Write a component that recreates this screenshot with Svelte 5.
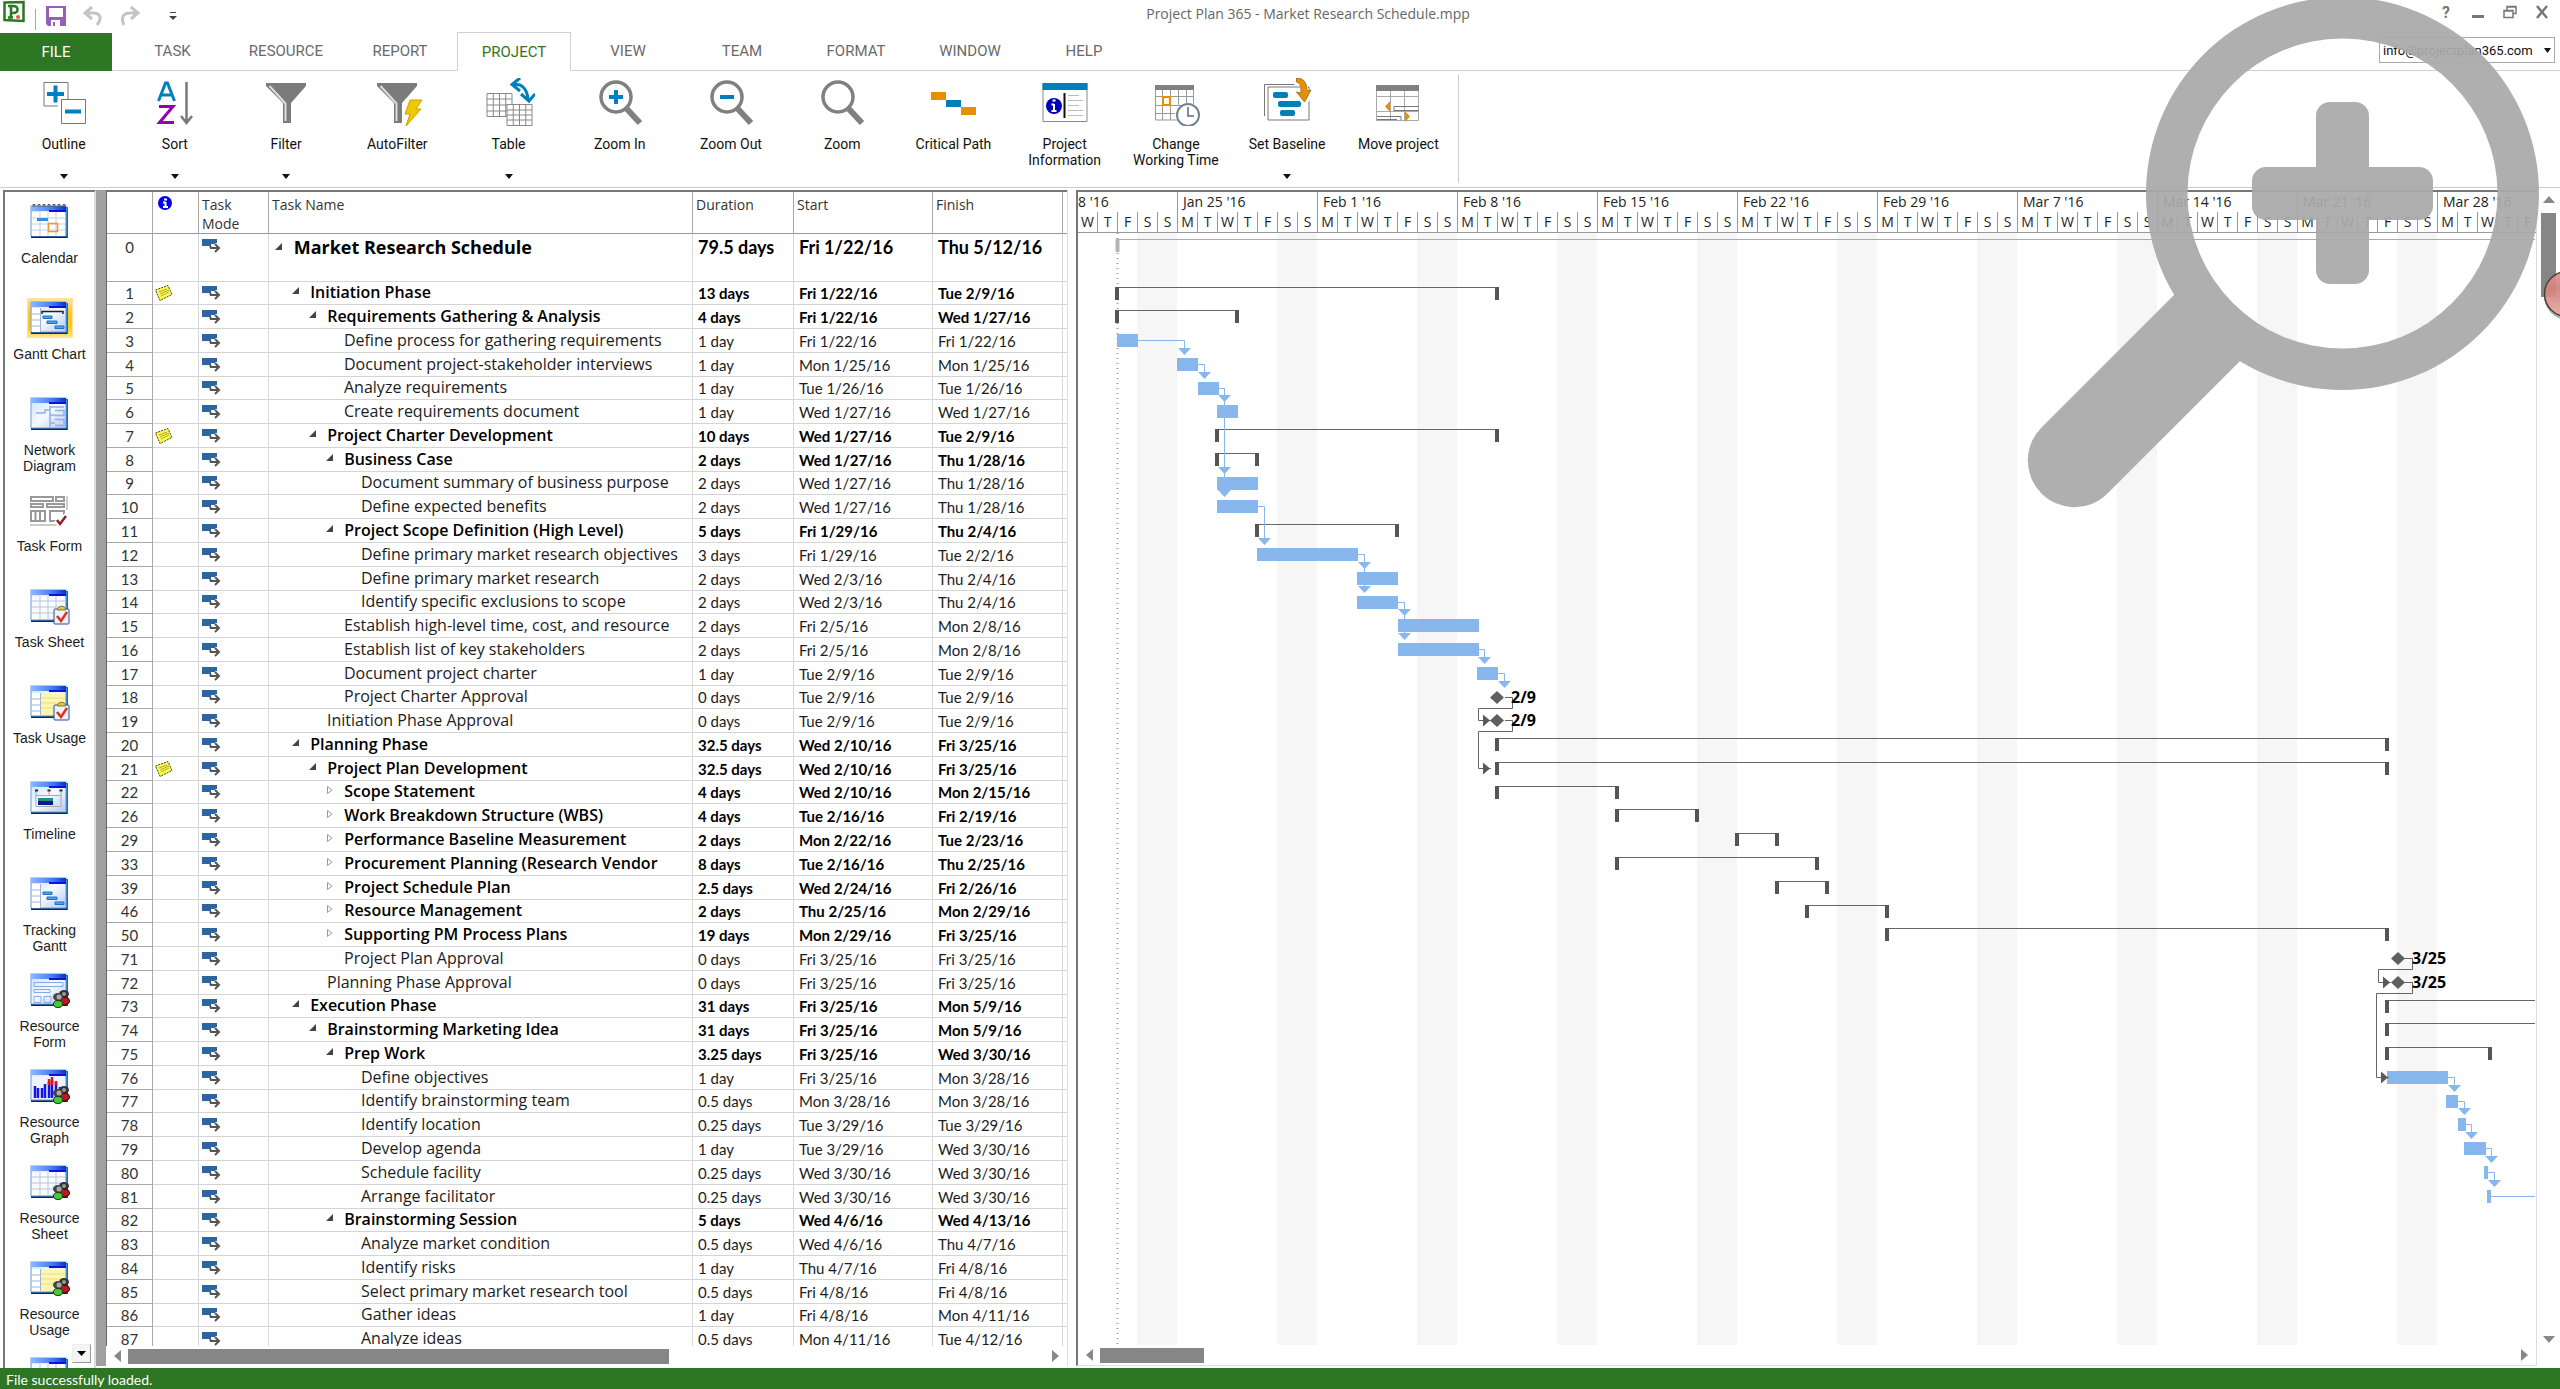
<script lang="ts">
	type Kind = 'open' | 'closed' | 'task';
	type Row = [id: number, level: number, name: string, duration: string, start: string, finish: string, kind: Kind];

	const tabs = ['TASK', 'RESOURCE', 'REPORT', 'PROJECT', 'VIEW', 'TEAM', 'FORMAT', 'WINDOW', 'HELP'];

	const commands = [
		{ icon: 'outline', label: 'Outline', menu: true },
		{ icon: 'sort', label: 'Sort', menu: true },
		{ icon: 'filter', label: 'Filter', menu: true },
		{ icon: 'autofilter', label: 'AutoFilter', menu: false },
		{ icon: 'table', label: 'Table', menu: true },
		{ icon: 'zoomin', label: 'Zoom In', menu: false },
		{ icon: 'zoomout', label: 'Zoom Out', menu: false },
		{ icon: 'zoom', label: 'Zoom', menu: false },
		{ icon: 'critical', label: 'Critical Path', menu: false },
		{ icon: 'info', label: 'Project Information', menu: false },
		{ icon: 'worktime', label: 'Change Working Time', menu: false },
		{ icon: 'baseline', label: 'Set Baseline', menu: true },
		{ icon: 'move', label: 'Move project', menu: false }
	];

	const views = [
		{ icon: 'calendar', label: 'Calendar' },
		{ icon: 'gantt', label: 'Gantt Chart' },
		{ icon: 'network', label: 'Network Diagram' },
		{ icon: 'form', label: 'Task Form' },
		{ icon: 'sheet', label: 'Task Sheet', badge: 'task' },
		{ icon: 'usage', label: 'Task Usage', badge: 'task' },
		{ icon: 'timeline', label: 'Timeline' },
		{ icon: 'tracking', label: 'Tracking Gantt' },
		{ icon: 'resform', label: 'Resource Form', badge: 'people' },
		{ icon: 'graph', label: 'Resource Graph', badge: 'people' },
		{ icon: 'sheet', label: 'Resource Sheet', badge: 'people' },
		{ icon: 'usage', label: 'Resource Usage', badge: 'people' },
		{ icon: 'sheet', label: '' }
	];

	const rows: Row[] = [
		[0, 0, 'Market Research Schedule', '79.5 days', 'Fri 1/22/16', 'Thu 5/12/16', 'open'],
		[1, 1, 'Initiation Phase', '13 days', 'Fri 1/22/16', 'Tue 2/9/16', 'open'],
		[2, 2, 'Requirements Gathering & Analysis', '4 days', 'Fri 1/22/16', 'Wed 1/27/16', 'open'],
		[3, 3, 'Define process for gathering requirements', '1 day', 'Fri 1/22/16', 'Fri 1/22/16', 'task'],
		[4, 3, 'Document project-stakeholder interviews', '1 day', 'Mon 1/25/16', 'Mon 1/25/16', 'task'],
		[5, 3, 'Analyze requirements', '1 day', 'Tue 1/26/16', 'Tue 1/26/16', 'task'],
		[6, 3, 'Create requirements document', '1 day', 'Wed 1/27/16', 'Wed 1/27/16', 'task'],
		[7, 2, 'Project Charter Development', '10 days', 'Wed 1/27/16', 'Tue 2/9/16', 'open'],
		[8, 3, 'Business Case', '2 days', 'Wed 1/27/16', 'Thu 1/28/16', 'open'],
		[9, 4, 'Document summary of business purpose', '2 days', 'Wed 1/27/16', 'Thu 1/28/16', 'task'],
		[10, 4, 'Define expected benefits', '2 days', 'Wed 1/27/16', 'Thu 1/28/16', 'task'],
		[11, 3, 'Project Scope Definition (High Level)', '5 days', 'Fri 1/29/16', 'Thu 2/4/16', 'open'],
		[12, 4, 'Define primary market research objectives', '3 days', 'Fri 1/29/16', 'Tue 2/2/16', 'task'],
		[13, 4, 'Define primary market research', '2 days', 'Wed 2/3/16', 'Thu 2/4/16', 'task'],
		[14, 4, 'Identify specific exclusions to scope', '2 days', 'Wed 2/3/16', 'Thu 2/4/16', 'task'],
		[15, 3, 'Establish high-level time, cost, and resource', '2 days', 'Fri 2/5/16', 'Mon 2/8/16', 'task'],
		[16, 3, 'Establish list of key stakeholders', '2 days', 'Fri 2/5/16', 'Mon 2/8/16', 'task'],
		[17, 3, 'Document project charter', '1 day', 'Tue 2/9/16', 'Tue 2/9/16', 'task'],
		[18, 3, 'Project Charter Approval', '0 days', 'Tue 2/9/16', 'Tue 2/9/16', 'task'],
		[19, 2, 'Initiation Phase Approval', '0 days', 'Tue 2/9/16', 'Tue 2/9/16', 'task'],
		[20, 1, 'Planning Phase', '32.5 days', 'Wed 2/10/16', 'Fri 3/25/16', 'open'],
		[21, 2, 'Project Plan Development', '32.5 days', 'Wed 2/10/16', 'Fri 3/25/16', 'open'],
		[22, 3, 'Scope Statement', '4 days', 'Wed 2/10/16', 'Mon 2/15/16', 'closed'],
		[26, 3, 'Work Breakdown Structure (WBS)', '4 days', 'Tue 2/16/16', 'Fri 2/19/16', 'closed'],
		[29, 3, 'Performance Baseline Measurement', '2 days', 'Mon 2/22/16', 'Tue 2/23/16', 'closed'],
		[33, 3, 'Procurement Planning (Research Vendor', '8 days', 'Tue 2/16/16', 'Thu 2/25/16', 'closed'],
		[39, 3, 'Project Schedule Plan', '2.5 days', 'Wed 2/24/16', 'Fri 2/26/16', 'closed'],
		[46, 3, 'Resource Management', '2 days', 'Thu 2/25/16', 'Mon 2/29/16', 'closed'],
		[50, 3, 'Supporting PM Process Plans', '19 days', 'Mon 2/29/16', 'Fri 3/25/16', 'closed'],
		[71, 3, 'Project Plan Approval', '0 days', 'Fri 3/25/16', 'Fri 3/25/16', 'task'],
		[72, 2, 'Planning Phase Approval', '0 days', 'Fri 3/25/16', 'Fri 3/25/16', 'task'],
		[73, 1, 'Execution Phase', '31 days', 'Fri 3/25/16', 'Mon 5/9/16', 'open'],
		[74, 2, 'Brainstorming Marketing Idea', '31 days', 'Fri 3/25/16', 'Mon 5/9/16', 'open'],
		[75, 3, 'Prep Work', '3.25 days', 'Fri 3/25/16', 'Wed 3/30/16', 'open'],
		[76, 4, 'Define objectives', '1 day', 'Fri 3/25/16', 'Mon 3/28/16', 'task'],
		[77, 4, 'Identify brainstorming team', '0.5 days', 'Mon 3/28/16', 'Mon 3/28/16', 'task'],
		[78, 4, 'Identify location', '0.25 days', 'Tue 3/29/16', 'Tue 3/29/16', 'task'],
		[79, 4, 'Develop agenda', '1 day', 'Tue 3/29/16', 'Wed 3/30/16', 'task'],
		[80, 4, 'Schedule facility', '0.25 days', 'Wed 3/30/16', 'Wed 3/30/16', 'task'],
		[81, 4, 'Arrange facilitator', '0.25 days', 'Wed 3/30/16', 'Wed 3/30/16', 'task'],
		[82, 3, 'Brainstorming Session', '5 days', 'Wed 4/6/16', 'Wed 4/13/16', 'open'],
		[83, 4, 'Analyze market condition', '0.5 days', 'Wed 4/6/16', 'Thu 4/7/16', 'task'],
		[84, 4, 'Identify risks', '1 day', 'Thu 4/7/16', 'Fri 4/8/16', 'task'],
		[85, 4, 'Select primary market research tool', '0.5 days', 'Fri 4/8/16', 'Fri 4/8/16', 'task'],
		[86, 4, 'Gather ideas', '1 day', 'Fri 4/8/16', 'Mon 4/11/16', 'task'],
		[87, 4, 'Analyze ideas', '0.5 days', 'Mon 4/11/16', 'Tue 4/12/16', 'task']
	];

	const noted = [1, 7, 21];

	const days = ['M', 'T', 'W', 'T', 'F', 'S', 'S'];
	// the chart starts on a Wednesday and ends on a Friday
	const weeks = [
		{ label: "8 '16", days: days.slice(2) },
		...['Jan 25', 'Feb 1', 'Feb 8', 'Feb 15', 'Feb 22', 'Feb 29', 'Mar 7', 'Mar 14', 'Mar 21'].map((w) => ({
			label: `${w} '16`,
			days
		})),
		{ label: "Mar 28 '16", days: days.slice(0, 5) }
	];

	// chart x runs from Wed Jan 20, 20px per day
	const DAY = 20;
	// the project row is two rows tall
	const ROW = 23.77;

	function rowTop(index: number) {
		return index === 0 ? 0 : Math.round((index + 1) * ROW);
	}
	const tops = new Map(rows.map((r, i) => [r[0], rowTop(i)]));
	const top = (id: number) => tops.get(id) ?? 0;

	// [row, first day, last day]
	const summaries = [
		[1, 2, 21], [2, 2, 8], [7, 7, 21], [8, 7, 9], [11, 9, 16],
		[20, 21, 65.5], [21, 21, 65.5], [22, 21, 27], [26, 27, 31], [29, 33, 35],
		[33, 27, 37], [39, 35, 37.5], [46, 36.5, 40.5], [50, 40.5, 65.5],
		[73, 65.5, 90], [74, 65.5, 90], [75, 65.5, 70.65]
	];
	const bars = [
		[3, 2, 3], [4, 5, 6], [5, 6.05, 7.05], [6, 7, 8], [9, 7, 9], [10, 7, 9],
		[12, 9, 14], [13, 14, 16], [14, 14, 16], [15, 16.05, 20.05], [16, 16.05, 20.05], [17, 20, 21],
		[76, 65.5, 68.5], [77, 68.45, 69], [78, 69.05, 69.4], [79, 69.35, 70.4], [80, 70.35, 70.5], [81, 70.5, 70.65]
	];
	// [from row, first x, turn x, to row]
	const links = [
		[3, 60, 108, 4], [4, 120, 128, 5], [5, 141, 148, 6], [5, 141, 148, 9], [5, 141, 148, 10],
		[10, 180, 188, 12], [12, 280, 288, 13], [12, 280, 288, 14], [14, 320, 328, 15], [14, 320, 328, 16],
		[16, 401, 408, 17], [17, 420, 428, 18],
		[76, 1370, 1378, 77], [77, 1380, 1388, 78], [78, 1388, 1395, 79], [79, 1408, 1415, 80], [80, 1410, 1418, 81]
	];
	const milestones = [
		{ row: 18, x: 420, label: '2/9' },
		{ row: 19, x: 420, label: '2/9' },
		{ row: 71, x: 1321, label: '3/25' },
		{ row: 72, x: 1321, label: '3/25' }
	];
	// finish-to-start links that leave a milestone and wrap back to the left
	const wraps = [
		{ from: 18, x: 428, right: 435, left: 401, to: 19 },
		{ from: 19, x: 428, right: 435, left: 401, to: 21 },
		{ from: 71, x: 1327, right: 1335, left: 1301, to: 72 },
		{ from: 72, x: 1327, right: 1335, left: 1299, to: 76 }
	];

	let activeTab = $state('PROJECT');
	let activeView = $state(1);
</script>

{#snippet commandIcon(name: string)}
	<svg class="cmd-icon" width="52" height="48" viewBox="0 0 52 48" fill="none" aria-hidden="true">
		{#if name === 'outline'}
			<path d="M6 4.500h24v18M6 4v24h14" stroke="#777" /><path d="M23.500 21.500h24v24h-24z" fill="#fff" stroke="#777" />
			<path d="M9 16h17M17.500 7.500v17M27 33.500h16" stroke="#0080c0" stroke-width="4" />
		{:else if name === 'sort'}
			<path d="M9.500 23 16.500 5h2l7 18M12 17h11" stroke="#0080c0" stroke-width="3" />
			<path d="M10 28.500h14L10.500 44.500H25" stroke="#9400b0" stroke-width="3" />
			<path d="M37.500 4v41M32 38l5.500 7 5.500-7" stroke="#7a7a7a" stroke-width="2.500" />
		{:else if name === 'filter' || name === 'autofilter'}
			<path d="M6 5h40v3L31 25v20h-8V25L6 8z" fill="#7b7b7b" />
			<path d="M9.500 8 25.500 25.500V43" stroke="#ddd" stroke-width="2" />
			{#if name === 'autofilter'}
				<path d="M39 22h12l-6 9h5L35 48l4-12h-5z" fill="#f0c800" stroke="#c9a000" />
			{/if}
		{:else if name === 'table'}
			<path d="M4 15.500h25v23H4zM10.250 15v23M16.500 15v23M22.750 15v23M4 21h25M4 27h25M4 33h25" stroke="#888" />
			<path d="M24 27h25v21H24z" fill="#fff" />
			<path d="M24 26.500h25v21H24zM30.250 26v21M36.500 26v21M42.750 26v21M24 32h25M24 37h25M24 42h25" stroke="#888" />
			<path d="M30 7c9-2 14 4 15 14" stroke="#0080b8" stroke-width="3" /><path d="M37 0l-8 6.500 8 6.500M38 16l8 7 6-7" stroke="#0080b8" stroke-width="3" />
		{:else if name === 'zoomin' || name === 'zoomout' || name === 'zoom'}
			<circle cx="22" cy="19" r="15" stroke="#808080" stroke-width="3.500" />
			<path d="M32 30l14 15" stroke="#808080" stroke-width="6" />
			{#if name !== 'zoom'}<path d="M15 19h14" stroke="#0080c0" stroke-width="4" />{/if}
			{#if name === 'zoomin'}<path d="M22 12v14" stroke="#0080c0" stroke-width="4" />{/if}
		{:else if name === 'critical'}
			<path d="M4 14h15v8H4zM34 29h15v8H34z" fill="#e88f00" /><path d="M19 22h15v7H19z" fill="#0080b8" />
		{:else if name === 'info'}
			<path d="M4 5.500h44v38H4z" fill="#fff" stroke="#888" /><path d="M3.500 5h45v7h-45z" fill="#0080b8" />
			<circle cx="15" cy="28" r="8" fill="#0000b8" /><path d="M15 26v7M12.500 26.500H15M12.500 33h5M13.500 22.500h3" stroke="#fff" stroke-width="2" />
			<path d="M25.500 15v25" stroke="#111" stroke-width="2" /><path d="M29 17.500h11M29 22.500h15M29 27.500h11M29 32.500h15M29 37.500h15" stroke="#bbb" />
		{:else if name === 'worktime'}
			<path d="M5 7h39v5H5z" fill="#808080" />
			<path d="M5.500 12v30H27M43.500 12v14M5 18.500h38M5 27.500h36M5 35.500h20M12.500 12v30M20.500 12v30M28.500 12v15M36.500 12v13" stroke="#999" />
			<path d="M13 19h7v8h-7z" fill="#fff" stroke="#e88f00" stroke-width="2" />
			<circle cx="38" cy="37" r="11" fill="#fff" stroke="#6f8490" stroke-width="2" /><path d="M38 29v9h6" stroke="#666" stroke-width="1.500" />
		{:else if name === 'baseline'}
			<path d="M3.500 38V6.500h30" stroke="#777" /><path d="M7 9h41v33H7z" fill="#fff" stroke="#777" />
			<rect x="12" y="14" width="15" height="6" rx="2" fill="#0080b8" /><rect x="17" y="23" width="23" height="6" rx="2" fill="#0080b8" /><rect x="19" y="32" width="15" height="6" rx="2" fill="#0080b8" />
			<path d="M36 1.500c6 1 7.500 5 7.500 15M36.500 15l7 7 7-7" stroke="#fff" stroke-width="8" />
			<path d="M35.500 0c8 0 10.500 6 10.500 13l4-1-6.500 12-8-10 4.500 1c0-5 0-10-4.500-11z" fill="#e88f00" stroke="#a87820" />
		{:else}
			<path d="M4.500 7.500h42v35h-42zM4 18.500h42M4 33.500h42M18.500 12v31M32.500 12v31" stroke="#aaa" /><path d="M4 7h43v6H4z" fill="#808080" />
			<path d="M22 33v-4.500h25M5 38.500h24V42M22 32.500h25M5 41.500h20" stroke="#777" /><path d="M18 23v11l-5-5.500zM33 33v11l5-5.500z" fill="#e88f00" />
		{/if}
	</svg>
{/snippet}

{#snippet viewIcon(name: string, badge?: string)}
	<svg class="view-icon" width="44" height="38" viewBox="0 0 44 38" fill="none" aria-hidden="true">
		{#if name === 'form'}
			<path d="M3 6h22v4H3zM28 6h8v4h-8zM3 13h12v3H3zM19 13h17v3H19z" stroke="#999" stroke-width="2" />
			<path d="M3 20h14v10H3zM7.500 20v10M12 20v10M22 20h14v10H22z" stroke="#999" stroke-width="2" /><path d="M2 34h28M39 5v14" stroke="#999" />
			<path d="M28 29l4 4 7-9" stroke="#fff" stroke-width="6" /><path d="M29 29l3 4 6-8" stroke="#902020" stroke-width="2.500" />
		{:else}
			<path d="M4 4h36v31H4z" fill="#0a74c4" /><path d="M3 33h36v2H3z" fill="#062a5c" />
			<rect x="3" y="3" width="35" height="30" fill="url(#win-body)" stroke="#6d9be8" />
			<path d="M3 3h35v5H3z" fill="url(#win-title)" /><path d="M21 7h17v2H21z" fill="#1010d8" />
			{#if name === 'calendar'}
				<path d="M4 9h33v24H4z" fill="#fff" /><path d="M4 15h33M4 21h33M4 27h33M12 9v24M20 9v24M28 9v24" stroke="#c4cfe4" />
				<path d="M9 15h11v3H9z" fill="#2f8fe0" /><path d="M20.500 20.500h9v8h-9z" stroke="#f09a20" stroke-width="1.500" />
				<path d="M5 4V1.500h2V4M10 4V1.500h2V4M15 4V1.500h2V4M20 4V1.500h2V4M25 4V1.500h2V4M30 4V1.500h2V4M35 4V1.500h2V4" stroke="#555" />
			{:else if name === 'gantt' || name === 'tracking'}
				<path d="M4 9h8v24H4z" fill="#fff" /><path d="M4 15h8M4 21h8M4 27h8M12.500 9v24" stroke="#9fb4d8" />
				{#if name === 'gantt'}<path d="M14 15v-2.500h21V15" stroke="#222" stroke-width="1.500" />{/if}
				<path d="M15 17h9v2.500h-9zM19 22h10v2.500H19zM27 27h9v2.500h-9z" fill="#4da3ea" stroke="#1a74c8" />
			{:else if name === 'network'}
				<path d="M8 18h9M17 18v-3h5M22 11v22M22 12h14M22 20h5M22 28h5M27 15.500h9v5h-9M27 24.500h9v6h-9" stroke="#93b0e6" stroke-width="1.500" />
			{:else if name === 'sheet'}
				<path d="M4 9h33v23H4z" fill="#fff" opacity=".7" /><path d="M4 14h33M4 20h33M4 26h33M12 9v23M20 9v23M28 9v23" stroke="#b9c4dc" />
			{:else if name === 'usage'}
				<path d="M4 10h8v22H4z" fill="#fff" /><path d="M13 10h24v22H13z" fill="#fdf6b0" />
				<path d="M4 16h8M4 22h8M4 28h8M12.500 10v22" stroke="#9fb4d8" /><path d="M13 15h24M13 20h24M13 25h24" stroke="#e9dc7c" />
			{:else if name === 'timeline'}
				<path d="M8 16.500h25v11H8zM8 13v4M21 13v4M33 13v4" stroke="#aaa" /><path d="M7 11.500h3M19.500 11.500h3M31.500 11.500h3" stroke="#222" stroke-width="2" />
				<path d="M10 19h15v3H10z" fill="#1d9090" /><path d="M10 22h15v4H10z" fill="#101890" />
			{:else if name === 'resform'}
				<path d="M6 11.500h29v4H6zM6 18.500h16v3H6zM6 25.500h7v6H6zM16 25.500h7v6h-7z" stroke="#86a8e8" />
			{:else if name === 'graph'}
				<path d="M4 9h33v23H4z" fill="#eef3ff" /><path d="M7 19v12M10 21v10M14 21v10M17 17v14M21 15v16M24 13v18M28 15v16M32 20v11" stroke="#1414e8" stroke-width="2.500" />
				<path d="M21 12v6M24 10v8M28 14v4" stroke="#e81414" stroke-width="2.500" />
			{/if}
		{/if}
		{#if badge === 'task'}
			<rect x="26" y="22" width="15" height="15" rx="1" fill="#eef2fb" stroke="#24509c" /><path d="M29.500 23c0-5 8-5 8 0z" fill="#dcc84c" stroke="#8a7a20" />
			<path d="M29 29l4 5 6-9" stroke="#e03018" stroke-width="2.500" />
		{:else if badge === 'people'}
			<ellipse cx="36" cy="23" rx="5" ry="4" fill="#333" /><circle cx="36" cy="23" r="2" fill="#999" /><ellipse cx="37" cy="30" rx="4.500" ry="4" fill="#c01818" stroke="#400" />
			<ellipse cx="30" cy="26" rx="5" ry="4" fill="#444" /><circle cx="31" cy="26" r="2.500" fill="#aaa" /><ellipse cx="30" cy="33" rx="4.500" ry="3.500" fill="#4cc43c" stroke="#114010" />
		{/if}
	</svg>
{/snippet}

<svg class="defs" width="0" height="0" aria-hidden="true">
	<defs>
		<linearGradient id="win-body" x1="0" y1="0" x2="1" y2="1">
			<stop offset="0" stop-color="#cfe0ff" /><stop offset=".5" stop-color="#f6f9ff" /><stop offset="1" stop-color="#b4c8f6" />
		</linearGradient>
		<linearGradient id="win-title" x1="0" y1="0" x2="1" y2="0">
			<stop offset="0" stop-color="#8fb8fa" /><stop offset=".6" stop-color="#3f80ee" /><stop offset="1" stop-color="#1030d0" />
		</linearGradient>
		<linearGradient id="bubble" x1="0" y1="0" x2="0" y2="1">
			<stop offset="0" stop-color="#e99a94" /><stop offset=".4" stop-color="#d98780" /><stop offset="1" stop-color="#eeb0aa" />
		</linearGradient>
	</defs>
</svg>

<div class="app">
	<header class="titlebar">
		<div class="quick">
			<svg width="22" height="24" viewBox="0 0 22 24" fill="none" aria-hidden="true">
				<path d="M1.500 2.500 20.500 2v19l-19-1z" fill="#fff" stroke="#2d7623" stroke-width="2.500" />
				<path d="M5 17.500h5M8 18V6M5 6h5c6 0 6 7 0 7H8" stroke="#2d7623" stroke-width="2.500" /><circle cx="15" cy="17" r="2" fill="#f05050" />
			</svg>
			<span class="quick-sep"></span>
			<button aria-label="Save">
				<svg width="20" height="22" viewBox="0 0 20 22" aria-hidden="true"><path d="M0 1h20v20H2l-2-2z" fill="#9561b8" /><path d="M3 3h14v9H3zM5 15h9v6H5z" fill="#fff" /><path d="M7 17h2v4H7z" fill="#9561b8" /></svg>
			</button>
			<button aria-label="Undo">
				<svg width="20" height="22" viewBox="0 0 20 22" fill="none" aria-hidden="true"><path d="M2 8h8c8 0 9 6 4 12M9 2 2 8l7 6" stroke="#c4c4c4" stroke-width="3" /></svg>
			</button>
			<button aria-label="Redo">
				<svg width="20" height="22" viewBox="0 0 20 22" fill="none" aria-hidden="true"><path d="M18 8h-8C2 8 1 14 4 20M11 2l7 6-7 6" stroke="#c4c4c4" stroke-width="3" /></svg>
			</button>
			<button class="quick-more" aria-label="Customize toolbar">
				<svg width="8" height="10" viewBox="0 0 8 10" aria-hidden="true"><path d="M1 1h6v1H1zM0 5h8L4 9z" fill="#444" /></svg>
			</button>
		</div>
		<h1>Project Plan 365 - Market Research Schedule.mpp</h1>
		<div class="window-controls">
			<button aria-label="Help"><span>?</span></button>
			<button aria-label="Minimize"><svg width="14" height="14" viewBox="0 0 14 14" aria-hidden="true"><path d="M1 10h12v3H1z" fill="#777" /></svg></button>
			<button aria-label="Restore"><svg width="14" height="14" viewBox="0 0 14 14" fill="none" aria-hidden="true"><path d="M1 5.500h9v7H1zM4 5V1.500h9v7h-3M4 2h9M1 6h9" stroke="#777" stroke-width="1.500" /></svg></button>
			<button aria-label="Close"><svg width="14" height="14" viewBox="0 0 14 14" fill="none" aria-hidden="true"><path d="M2 1l10 12M12 1 2 13" stroke="#777" stroke-width="2.500" /></svg></button>
		</div>
	</header>

	<nav class="tabs">
		<button class="file">FILE</button>
		{#each tabs as tab}
			<button class="tab" class:active={activeTab === tab} onclick={() => (activeTab = tab)}>{tab}</button>
		{/each}
		<div class="tabs-rest">
			<select aria-label="Account">
				<option>info@projectplan365.com</option>
			</select>
			<svg class="select-arrow" width="7" height="5" viewBox="0 0 7 5" aria-hidden="true"><path d="M0 0h7L3.500 5z" fill="#111" /></svg>
		</div>
	</nav>

	<div class="ribbon">
		<div class="commands">
			{#each commands as command}
				<button class="command">
					{@render commandIcon(command.icon)}
					<span class="command-label">{command.label}</span>
					{#if command.menu}
						<svg width="8" height="5" viewBox="0 0 8 5" aria-hidden="true"><path d="M0 0h8L4 5z" fill="#111" /></svg>
					{/if}
				</button>
			{/each}
		</div>
	</div>

	<main>
		<aside class="views">
			{#each views as view, i}
				<button class="view" class:active={activeView === i} aria-label={view.label || 'More views'} onclick={() => (activeView = i)}>
					<span class="view-frame">{@render viewIcon(view.icon, view.badge)}</span>
					<span class="view-label">{view.label}</span>
				</button>
			{/each}
			<button class="views-down" aria-label="Scroll views down">
				<svg width="9" height="5" viewBox="0 0 9 5" aria-hidden="true"><path d="M0 0h9L4.500 5z" fill="#000" /></svg>
			</button>
		</aside>

		<section class="grid-pane">
			<div class="grid-body">
				<table>
					<colgroup>
						<col class="c-id" /><col class="c-info" /><col class="c-mode" /><col class="c-name" />
						<col class="c-duration" /><col class="c-start" /><col class="c-finish" /><col />
					</colgroup>
					<thead>
						<tr>
							<th></th>
							<th class="info">
								<svg width="14" height="14" viewBox="0 0 14 14" role="img" aria-label="Indicators"><circle cx="7" cy="7" r="7" fill="#0000f0" /><path d="M7.500 6v5M5 6.500h3M5 11h5M6 3.500h3" stroke="#fff" stroke-width="2" /></svg>
							</th>
							<th>Task Mode</th>
							<th>Task Name</th>
							<th>Duration</th>
							<th>Start</th>
							<th>Finish</th>
							<th></th>
						</tr>
					</thead>
					<tbody>
						{#each rows as [id, level, name, duration, start, finish, kind], i}
							<tr class:root={level === 0} class:summary={kind !== 'task'} style:height="{rowTop(i + 1) - rowTop(i)}px">
								<td class="id">{id}</td>
								<td class="info">
									{#if noted.includes(id)}
										<svg width="20" height="18" viewBox="0 0 20 18" aria-hidden="true"><path d="M1.500 6 14 1.500l4 9-12 6z" fill="#fbf84e" stroke="#44441a" stroke-dasharray="2 1" /><path d="M5 8l8-3M6 10l9-4M7 12l8-4" stroke="#b0a93a" /></svg>
									{/if}
								</td>
								<td class="mode">
									<svg width="20" height="14" viewBox="0 0 20 14" fill="none" aria-hidden="true"><path d="M0 0h15v7H0z" fill="#2f659f" /><path d="M9 5h4V4h2v3H9z" fill="#fff" /><path d="M8 9h8.500M8.500 7v2M13 5l4 4-4 4" stroke="#555" stroke-width="2" /></svg>
								</td>
								<td class="name" style:padding-left="{24 + level * 17}px">
									{#if kind === 'open'}
										<svg class="twisty" width="8" height="8" viewBox="0 0 8 8" aria-hidden="true"><path d="M7 0v7H0z" fill="#444" /></svg>
									{:else if kind === 'closed'}
										<svg class="twisty" width="8" height="8" viewBox="0 0 8 8" fill="none" aria-hidden="true"><path d="M1.500.500 6 4 1.500 7.500z" stroke="#999" /></svg>
									{/if}
									{name}
								</td>
								<td>{duration}</td>
								<td>{start}</td>
								<td>{finish}</td>
								<td></td>
							</tr>
						{/each}
					</tbody>
				</table>
			</div>
			<div class="hscroll">
				<svg width="7" height="12" viewBox="0 0 7 12" aria-hidden="true"><path d="M7 0v12L0 6z" fill="#888" /></svg>
				<div class="htrack"><div class="hthumb grid-thumb"></div></div>
				<svg width="7" height="12" viewBox="0 0 7 12" aria-hidden="true"><path d="M0 0v12l7-6z" fill="#888" /></svg>
			</div>
		</section>

		<section class="gantt-pane">
			<div class="gantt-head">
				{#each weeks as week}
					<div class="week">
						<span class="week-label">{week.label}</span>
						<div class="week-days">
							{#each week.days as day}<span>{day}</span>{/each}
						</div>
					</div>
				{/each}
			</div>
			<div class="gantt-body">
				<svg class="chart" fill="none" role="img" aria-label="Gantt chart">
					{#each weeks as _, i}
						<rect x={60 + i * 140} y="0" width="40" height="100%" fill="#f6f6f6" />
					{/each}
					<path d="M40.500 0v1120" stroke="#a0a0a0" stroke-width="2" stroke-dasharray="1 4" />
					<path d="M40 6.500h1440" stroke="#aaa" /><path d="M40.500 6v13" stroke="#b4b4b4" stroke-width="4" />

					{#each summaries as [id, from, to]}
						<path d="M{from * DAY} {top(id) + 6}.5H{to * DAY}" stroke="#666" />
						<path d="M{from * DAY} {top(id) + 6}v13M{to * DAY} {top(id) + 6}v13" stroke="#555" stroke-width="4" />
					{/each}

					{#each bars as [id, from, to]}
						<rect x={from * DAY} y={top(id) + 6} width={(to - from) * DAY + 1} height="13" fill="#87b7ed" />
					{/each}

					{#each links as [from, x, turn, to]}
						<path d="M{x} {top(from) + 12}.5H{turn - 1}.5V{top(to)}" stroke="#87b7ed" />
						<path d="M{turn - 7} {top(to) - 4}h13l-6.500 7z" fill="#87b7ed" />
					{/each}
					<path d="M1413 {top(81) + 12}.5H1480" stroke="#87b7ed" />

					{#each wraps as wrap}
						<path d="M{wrap.x} {top(wrap.from) + 12}.5H{wrap.right}.5V{top(wrap.from) + 23}.5H{wrap.left}.5V{top(wrap.to) + 12}.5H{wrap.left + 13}" stroke="#666" />
						<path d="M{wrap.left + 5} {top(wrap.to) + 6}.5v12l7-6z" fill="#5a5a5a" />
					{/each}

					{#each milestones as milestone}
						<path d="M{milestone.x} {top(milestone.row) + 6}l7 6.500-7 6.500-7-6.500z" fill="#5f5f5f" />
						<text x={milestone.x + 14} y={top(milestone.row) + 18}>{milestone.label}</text>
					{/each}
				</svg>
			</div>
			<div class="hscroll">
				<svg width="7" height="12" viewBox="0 0 7 12" aria-hidden="true"><path d="M7 0v12L0 6z" fill="#888" /></svg>
				<div class="htrack"><div class="hthumb gantt-thumb"></div></div>
				<svg width="7" height="12" viewBox="0 0 7 12" aria-hidden="true"><path d="M0 0v12l7-6z" fill="#888" /></svg>
			</div>
		</section>

		<div class="vscroll">
			<svg width="12" height="7" viewBox="0 0 12 7" aria-hidden="true"><path d="M6 0l6 7H0z" fill="#888" /></svg>
			<div class="vthumb"></div>
			<svg width="12" height="7" viewBox="0 0 12 7" aria-hidden="true"><path d="M0 0h12L6 7z" fill="#888" /></svg>
		</div>
	</main>

	<footer>File successfully loaded.</footer>

	<svg class="lens" width="540" height="520" viewBox="0 0 540 520" aria-hidden="true">
		<g fill="#aaa" opacity=".93">
			<path fill-rule="evenodd" d="M322.500-3a196.500 196.500 0 0 1 0 393 196.500 196.500 0 0 1 0-393zM322.500 38.500a155 155 0 0 0 0 310 155 155 0 0 0 0-310z" />
			<path d="M159 290 22 427A46 46 0 0 0 87 494L225 356l-6-12-48-48z" />
			<path d="M310 102h25a14 14 0 0 1 14 14v51h50a14 14 0 0 1 14 14v25a14 14 0 0 1-14 14h-50v50a14 14 0 0 1-14 14h-25a14 14 0 0 1-14-14v-50h-50a14 14 0 0 1-14-14v-25a14 14 0 0 1 14-14h50v-51a14 14 0 0 1 14-14z" />
		</g>
		<circle cx="548" cy="296" r="24" fill="#000" opacity=".3" />
		<circle cx="547" cy="294" r="22.500" fill="url(#bubble)" fill-opacity=".9" stroke="#443" stroke-width="1.500" />
	</svg>
</div>

<style>
	:global(body) {
		background: #fff;
	}

	.app {
		position: relative;
		display: flex;
		flex-direction: column;
		height: 100vh;
		overflow: hidden;
		background: #fff;
		color: #1c1c1c;
		font-family: Roboto, "Liberation Sans", sans-serif;
		font-size: 14px;
	}
	.app *, .app *::before {
		box-sizing: border-box;
	}
	.defs {
		position: absolute;
	}
	button {
		padding: 0;
		border: 0;
		background: none;
		color: inherit;
		font: inherit;
		cursor: pointer;
	}

	/* title bar */
	.titlebar {
		display: flex;
		flex: none;
		height: 32px;
	}
	.quick {
		display: flex;
		align-items: flex-start;
		gap: 17px;
		width: 186px;
		padding-left: 3px;
	}
	.quick button {
		margin-top: 5px;
	}
	.quick .quick-more {
		margin: 11px 0 0 12px;
		line-height: 8px;
	}
	.quick-sep {
		width: 1px;
		height: 21px;
		margin: 9px -7px 0;
		background: #aaa;
	}
	h1 {
		flex: 1;
		margin: 0;
		color: #666;
		font: 14px/27px "Open Sans", "Noto Sans", sans-serif;
		text-align: center;
	}
	.window-controls {
		display: flex;
		width: 130px;
		height: 24px;
		padding-right: 2px;
		color: #777;
		font-size: 16px;
		font-weight: bold;
	}
	.window-controls button {
		display: grid;
		flex: 1;
		place-items: center;
	}

	/* tabs */
	.tabs {
		display: flex;
		flex: none;
		height: 39px;
		color: #6a6a6a;
		font-size: 15px;
	}
	.file {
		width: 112px;
		margin-top: 1px;
		background: #2d7623;
		color: #fff;
	}
	.tab {
		width: 114px;
		border-bottom: 1px solid #d0d0d0;
	}
	.file + .tab {
		width: 117px;
		padding-left: 4px;
	}
	.tab.active {
		border: 1px solid #d0d0d0;
		border-bottom-color: #fff;
		color: #2d7623;
	}
	.tabs-rest {
		position: relative;
		flex: 1;
		padding: 5px 5px 0 0;
		border-bottom: 1px solid #d0d0d0;
		text-align: right;
	}
	select {
		width: 176px;
		height: 26px;
		padding: 0 3px;
		border: 1px solid #aaa;
		border-radius: 0;
		appearance: none;
		background: #fff;
		color: #111;
		font: 13px Roboto, sans-serif;
	}
	.select-arrow {
		position: absolute;
		top: 16px;
		right: 9px;
	}

	/* ribbon */
	.ribbon {
		flex: none;
		height: 117px;
		padding-left: 8px;
		border-bottom: 1px solid #ccc;
	}
	.commands {
		display: grid;
		grid-template-columns: repeat(13, 1fr);
		width: 1451px;
		height: 108px;
		margin-top: 4px;
		padding-right: 4px;
		border-right: 1px solid #ccc;
	}
	.command {
		display: grid;
		grid-template-rows: 57px 42px 6px;
		justify-items: center;
		color: #111;
	}
	.cmd-icon {
		margin-top: 3px;
	}
	.command-label {
		width: 90px;
		line-height: 16px;
		padding-top: 4px;
	}

	main {
		display: flex;
		flex: 1;
		min-height: 0;
		padding-top: 2px;
	}

	/* view bar */
	.views {
		position: relative;
		flex: none;
		width: 93px;
		margin-left: 3px;
		padding-top: 10px;
		overflow: hidden;
		border: solid #777;
		border-width: 2px 0 0 2px;
		border-right: 2px solid #ddd;
	}
	.view {
		display: flex;
		flex-direction: column;
		align-items: center;
		width: 100%;
		height: 96px;
		font: 14px/16px "Liberation Sans", Arial, sans-serif;
	}
	.view-frame {
		display: grid;
		place-items: center;
		width: 46px;
		height: 40px;
		margin-bottom: 8px;
	}
	.view.active .view-frame {
		background: linear-gradient(#fbe7a4, #ffc814 40%, #ffc814 75%, #fce6a0);
		outline: 1px solid #f8e2a4;
		outline-offset: -1px;
	}
	.view-label {
		width: 76px;
	}
	.views-down {
		position: absolute;
		right: 3px;
		bottom: 5px;
		display: grid;
		place-items: center;
		width: 19px;
		height: 19px;
		border: 1px solid;
		border-color: #eee #999 #999 #eee;
		background: #f4f4f4;
	}

	/* task table */
	.grid-pane {
		display: flex;
		flex: none;
		flex-direction: column;
		width: 972px;
		border-left: 10px solid #a0a0a0;
		border-right: 1px solid #ddd;
		margin-bottom: 2px;
	}
	.grid-body {
		flex: 1;
		min-height: 0;
		overflow: hidden;
		border-top: 2px solid #777;
		border-left: 1px solid #666;
	}
	table {
		width: 100%;
		border-spacing: 0;
		table-layout: fixed;
		font-family: Lato, "Open Sans", sans-serif;
		font-size: 15px;
		line-height: 20px;
	}
	.c-id { width: 46px; }
	.c-info { width: 46px; }
	.c-mode { width: 70px; }
	.c-name { width: 424px; }
	.c-duration { width: 101px; }
	.c-start { width: 139px; }
	.c-finish { width: 130px; }
	th {
		height: 41px;
		padding: 3px 3px 0;
		overflow: hidden;
		border-right: 1px solid #a8a8a8;
		border-bottom: 1px solid #999;
		color: #333;
		font: 14px/19px "Open Sans", "Noto Sans", sans-serif;
		text-align: left;
		vertical-align: top;
	}
	th:last-child, td:last-child {
		border-right: 0;
	}
	th.info {
		padding: 4px 5px;
		line-height: 14px;
	}
	td {
		padding: 0 0 0 5px;
		overflow: hidden;
		border-right: 1px solid #d8d8d8;
		border-bottom: 1px solid #d4d4d4;
		white-space: nowrap;
	}
	td.id {
		padding: 0;
		border-color: #a8a8a8;
		color: #333;
		text-align: center;
	}
	td.name {
		padding-bottom: 2px;
		font-family: "Open Sans", "Noto Sans", sans-serif;
		font-size: 16px;
	}
	td.info, td.mode {
		padding: 0 0 0 3px;
		line-height: 0;
	}
	td.info {
		padding-left: 1px;
	}
	.summary td:not(.id) {
		color: #000;
		font-weight: bold;
	}
	.summary td.name:not(.id) {
		font-weight: 600;
	}
	.root td {
		padding-top: 3px;
		vertical-align: top;
	}
	.root td:not(.id) {
		font-size: 18px;
	}
	.root td.name:not(.id) {
		font-weight: bold;
	}
	.root td.mode {
		padding-top: 5px;
	}
	.twisty {
		margin: 0 6px 3px -18px;
	}

	/* scroll bars */
	.hscroll {
		display: flex;
		flex: none;
		align-items: center;
		height: 20px;
		padding: 0 8px;
	}
	.htrack {
		flex: 1;
		padding: 0 7px;
	}
	.hthumb {
		height: 15px;
		background: #868686;
	}
	.grid-thumb {
		width: 59%;
	}
	.gantt-thumb {
		width: 104px;
	}
	.vscroll {
		display: flex;
		flex: none;
		flex-direction: column;
		align-items: center;
		width: 23px;
		padding: 6px 0 25px;
	}
	.vthumb {
		width: 15px;
		height: 84px;
		margin: 10px 0 auto;
		background: #868686;
	}

	/* gantt chart */
	.gantt-pane {
		display: flex;
		flex: 1;
		flex-direction: column;
		min-width: 0;
		margin: 0 0 2px 8px;
		border-top: 2px solid #777;
		border-left: 2px solid #777;
		border-right: 1px solid #ddd;
		border-bottom: 1px solid #ddd;
	}
	.gantt-head {
		display: flex;
		flex: none;
		height: 41px;
		overflow: hidden;
		border-bottom: 1px solid #999;
		color: #222;
		font: 14px/19px "Open Sans", "Noto Sans", sans-serif;
	}
	.week {
		display: flex;
		flex: none;
		flex-direction: column;
		width: 140px;
		border-left: 1px solid #999;
	}
	.week:first-child {
		width: 99px;
		border-left: 0;
	}
	.week:last-child {
		width: 100px;
	}
	.week-label {
		padding: 0 0 1px 5px;
	}
	.week:first-child .week-label {
		padding-left: 0;
	}
	.week-days {
		display: flex;
		flex: 1;
	}
	.week-days span {
		flex: 1;
		text-align: center;
	}
	.week-days span + span {
		border-left: 1px solid #999;
	}
	.gantt-body {
		flex: 1;
		min-height: 0;
		overflow: hidden;
	}
	.chart {
		display: block;
		width: 100%;
		height: 100%;
		margin-left: -1px;
	}
	.chart text {
		fill: #000;
		font: bold 16px "Open Sans", "Noto Sans", sans-serif;
	}

	footer {
		flex: none;
		height: 21px;
		padding-left: 6px;
		background: #2d7623;
		color: #fff;
		font-family: Lato, "Open Sans", sans-serif;
		font-size: 14px;
		line-height: 24px;
	}

	.lens {
		position: absolute;
		top: 0;
		right: 0;
		pointer-events: none;
	}
</style>
